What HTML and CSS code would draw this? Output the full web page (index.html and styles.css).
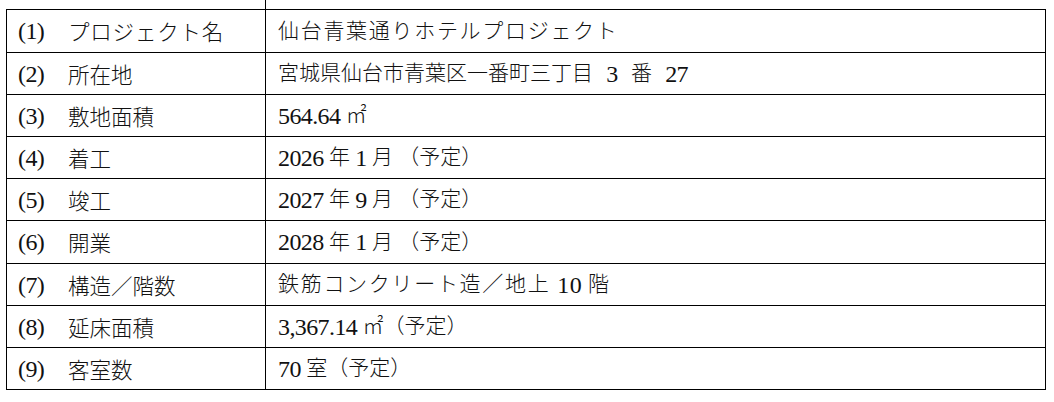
FILE: index.html
```html
<!DOCTYPE html>
<html lang="ja">
<head>
<meta charset="utf-8">
<title>プロジェクト概要</title>
<link rel="stylesheet" href="styles.css">
</head>
<body>
<div class="spec">
  <div class="row r-tall"><div class="key"><span class="no">(1)</span><span class="label spaced-s">プロジェクト名</span></div><div class="val spaced">仙台青葉通りホテルプロジェクト</div></div>
  <div class="row"><div class="key"><span class="no">(2)</span><span class="label">所在地</span></div><div class="val loose">宮城県仙台市青葉区一番町三丁目 <span class="num">3</span> 番 <span class="num">27</span></div></div>
  <div class="row"><div class="key"><span class="no">(3)</span><span class="label">敷地面積</span></div><div class="val"><span class="num">564.64 </span>㎡</div></div>
  <div class="row"><div class="key"><span class="no">(4)</span><span class="label">着工</span></div><div class="val"><span class="num">2026 </span>年 <span class="num">1 </span>月 （予定）</div></div>
  <div class="row"><div class="key"><span class="no">(5)</span><span class="label">竣工</span></div><div class="val"><span class="num">2027 </span>年 <span class="num">9 </span>月 （予定）</div></div>
  <div class="row r-tall"><div class="key"><span class="no">(6)</span><span class="label">開業</span></div><div class="val"><span class="num">2028 </span>年 <span class="num">1 </span>月 （予定）</div></div>
  <div class="row"><div class="key"><span class="no">(7)</span><span class="label">構造／階数</span></div><div class="val spaced">鉄筋コンクリート造／地上 <span class="num tight">10 </span>階</div></div>
  <div class="row"><div class="key"><span class="no">(8)</span><span class="label">延床面積</span></div><div class="val"><span class="num">3,367.14 </span>㎡（予定）</div></div>
  <div class="row"><div class="key"><span class="no">(9)</span><span class="label">客室数</span></div><div class="val"><span class="num">70 </span>室（予定）</div></div>
</div>
</body>
</html>
```
FILE: styles.css
```css
html, body {
  margin: 0;
  padding: 0;
  background: #fff;
}

body {
  font-family: "Liberation Serif", "Noto Sans CJK JP", serif;
  font-size: 21px;
  font-weight: 300;
  color: #111;
}

.spec {
  position: relative;
  margin: 9px 0 0 6px;
  width: 1040px;
  box-sizing: border-box;
  border-top: 1px solid #000;
  border-left: 1px solid #000;
  display: flex;
  flex-direction: column;
}

.spec::before {
  content: "";
  position: absolute;
  left: 258px;
  top: -10px;
  width: 1px;
  height: 10px;
  background: #000;
}

.row {
  display: grid;
  grid-template-columns: 259px 780px;
  height: 42px;
}

.row.r-tall {
  height: 43px;
}

.key, .val {
  box-sizing: border-box;
  border-right: 1px solid #000;
  border-bottom: 1px solid #000;
  display: flex;
  align-items: center;
  line-height: 1;
  white-space: pre;
}

.key {
  padding-left: 11px;
}

.no {
  display: inline-block;
  width: 50px;
  font-size: 24px;
  letter-spacing: -0.6px;
}

.label {
  font-family: "Noto Sans CJK JP", sans-serif;
  font-size: 21.5px;
}

.val {
  padding-left: 12px;
}

.num {
  font-size: 24px;
  letter-spacing: -0.6px;
}

.spaced {
  letter-spacing: 1.7px;
}

.spaced .num {
  letter-spacing: 0.4px;
}

.tight {
  word-spacing: -0.5px;
}

.spaced-s {
  letter-spacing: 0.8px;
}

.loose {
  word-spacing: 8px;
}
```
